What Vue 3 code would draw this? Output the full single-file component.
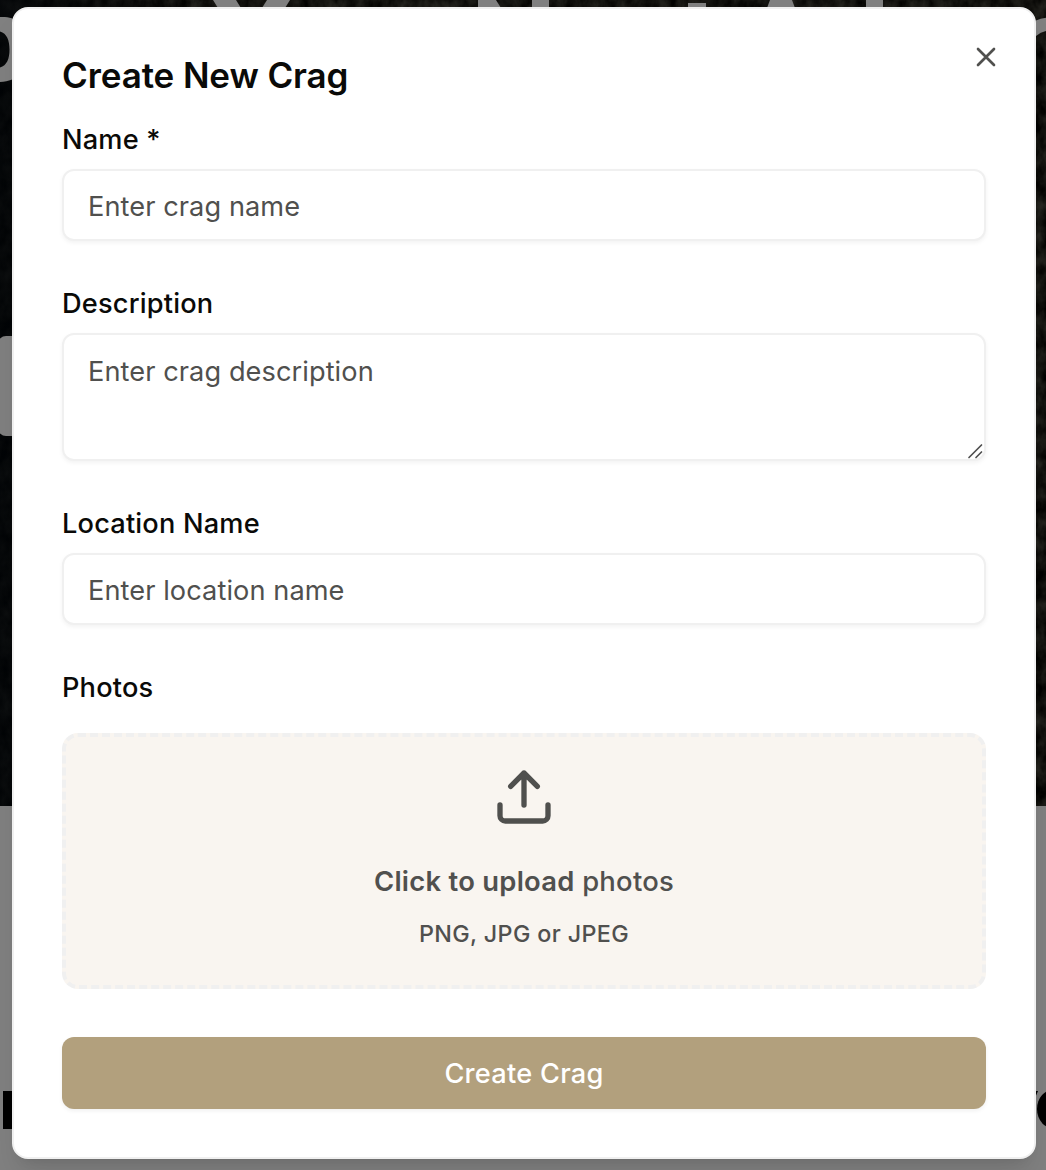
<script setup>
const fields = [
  { id: 'name', label: 'Name *', placeholder: 'Enter crag name' },
  { id: 'description', label: 'Description', placeholder: 'Enter crag description', area: true },
  { id: 'location', label: 'Location Name', placeholder: 'Enter location name' },
]
</script>

<template>
  <div class="page">
    <svg class="backdrop" width="1046" height="1170" viewBox="0 0 1046 1170" aria-hidden="true">
      <defs>
        <filter id="rock" x="0" y="0" width="100%" height="100%" color-interpolation-filters="sRGB">
          <feTurbulence type="fractalNoise" baseFrequency="0.09 0.06" numOctaves="4" seed="8" />
          <feColorMatrix values="0.22 0 0 0 -0.04  0.22 0 0 0 -0.042  0.2 0 0 0 -0.045  0 0 0 0 1" />
        </filter>
        <linearGradient id="shade" x1="0" x2="1" y1="0" y2="0">
          <stop offset="0" stop-color="#020508" stop-opacity=".75" />
          <stop offset=".2" stop-color="#020508" stop-opacity="0" />
        </linearGradient>
      </defs>
      <rect width="1046" height="1170" fill="#808080" />
      <rect width="1046" height="806" filter="url(#rock)" />
      <rect width="1046" height="806" fill="url(#shade)" />
      <g fill="#808080">
        <path d="M213 0h23l5 8h-23z M267 0h23l-5 8h-23z" />
        <path d="M478 0h18l5 8h-23z M532 0h17v8h-17z" />
        <path d="M688 3h18v5h-18z M770 0h22l3 8h-28z M866 0h17v8h-17z" />
        <rect x="-2" y="336" width="30" height="100" rx="8" />
      </g>
      <path d="M-4 17H2C10 17 14 18 20 24V74C14 80 8 82-4 82V68C6 68 9.500 60 9.500 49.500S6 31-4 31z" fill="#808080" />
      <path d="M1032 31Q1039 24.5 1050 24" fill="none" stroke="#808080" stroke-width="13" />
      <rect x="3" y="1091" width="24" height="38" fill="#000" />
      <path d="M1032 1091h6l-4 9z" fill="#000" />
      <ellipse cx="1055" cy="1109" rx="18" ry="20" fill="#000" />
    </svg>

    <section class="dialog" role="dialog" aria-labelledby="title">
      <button class="close" type="button" aria-label="Close">
        <svg width="32" height="32" viewBox="0 0 24 24"><path d="M18 6 6 18M6 6l12 12" /></svg>
      </button>
      <h2 id="title">Create New Crag</h2>
      <form @submit.prevent>
        <div v-for="f in fields" :key="f.id" class="field">
          <label :for="f.id">{{ f.label }}</label>
          <textarea v-if="f.area" :id="f.id" :placeholder="f.placeholder"></textarea>
          <input v-else :id="f.id" type="text" :placeholder="f.placeholder" />
          <svg v-if="f.area" class="grip" width="16" height="16" viewBox="0 0 16 16">
            <path d="M2 14.5 14.5 2M9 14.5 14.5 9" />
          </svg>
        </div>
        <div class="photos">
          <span class="label">Photos</span>
          <div class="drop">
            <svg width="64" height="64" viewBox="0 0 24 24">
              <path d="M21 15v4a2 2 0 0 1-2 2H5a2 2 0 0 1-2-2v-4M17 8l-5-5-5 5M12 3v12" />
            </svg>
            <p class="prompt"><b>Click to upload</b> photos</p>
            <p class="types">PNG, JPG or JPEG</p>
          </div>
        </div>
        <button class="submit" type="submit">Create Crag</button>
      </form>
    </section>
  </div>
</template>

<style>
body { margin: 0; }
</style>

<style scoped>
.page {
  position: relative;
  box-sizing: border-box;
  width: 1046px;
  height: 1170px;
  padding: 7px 10px 11px 12px;
  overflow: hidden;
  font-family: Inter, "Liberation Sans", sans-serif;
  color: #0a0a08;
}
.backdrop { position: absolute; inset: 0; }
.dialog {
  position: relative;
  box-sizing: border-box;
  height: 1152px;
  padding: 48px;
  border: 2px solid #f0f0f0;
  border-radius: 16px;
  background: #fff;
  box-shadow: 0 20px 30px -6px rgba(0, 0, 0, .1), 0 8px 12px -8px rgba(0, 0, 0, .1);
}
.close {
  position: absolute;
  top: 32px;
  right: 32px;
  width: 32px;
  height: 32px;
  padding: 0;
  border: 0;
  background: none;
}
svg path { stroke-linecap: round; stroke-linejoin: round; }
.close svg, .drop svg { display: block; fill: none; stroke: #50504e; stroke-width: 2; }
h2 {
  margin: 0 0 32px;
  font-size: 35px;
  line-height: 36px;
  font-weight: 600;
  letter-spacing: -.1px;
}
form { display: flex; flex-direction: column; gap: 48px; }
.field { position: relative; display: flex; flex-direction: column; gap: 16px; }
label, .label {
  display: block;
  box-sizing: border-box;
  height: 28px;
  padding-top: 1px;
  font-size: 27.2px;
  line-height: 28px;
  font-weight: 500;
  letter-spacing: .18px;
}
input, textarea {
  display: block;
  box-sizing: border-box;
  width: 100%;
  height: 72px;
  margin: 0;
  padding: 3px 24px 0;
  border: 2px solid #f0f0f0;
  border-radius: 12px;
  background: #fff;
  box-shadow: 0 2px 4px rgba(0, 0, 0, .05);
  font: 400 27.2px/40px Inter, "Liberation Sans", sans-serif;
  letter-spacing: .07px;
  outline: none;
}
textarea { height: 128px; padding: 17px 24px 15px; resize: none; overflow: hidden; }
::placeholder { color: #50504e; opacity: 1; }
.grip { position: absolute; right: 3px; bottom: 2px; fill: none; stroke: #505050; stroke-width: 1.7; }
.photos { display: flex; flex-direction: column; gap: 32px; }
.drop {
  display: flex;
  flex-direction: column;
  align-items: center;
  box-sizing: border-box;
  height: 256px;
  padding-top: 28px;
  border: 4px dashed #f0f0f0;
  border-radius: 16px;
  background: #f9f5f0;
  color: #50504e;
}
.drop p { margin: 0; white-space: nowrap; }
.prompt { padding-top: 32px; font-size: 27.4px; font-weight: 450; line-height: 40px; letter-spacing: .26px; }
.prompt b { font-weight: 600; }
.types { padding-top: 17px; font-size: 23.3px; font-weight: 450; line-height: 32px; letter-spacing: .38px; }
.submit {
  height: 72px;
  padding: 1px 0 0;
  border: 0;
  border-radius: 12px;
  background: #b2a07d;
  box-shadow: 0 2px 4px rgba(0, 0, 0, .06);
  color: #fff;
  font: 500 27.2px/40px Inter, "Liberation Sans", sans-serif;
  letter-spacing: .25px;
}
</style>
